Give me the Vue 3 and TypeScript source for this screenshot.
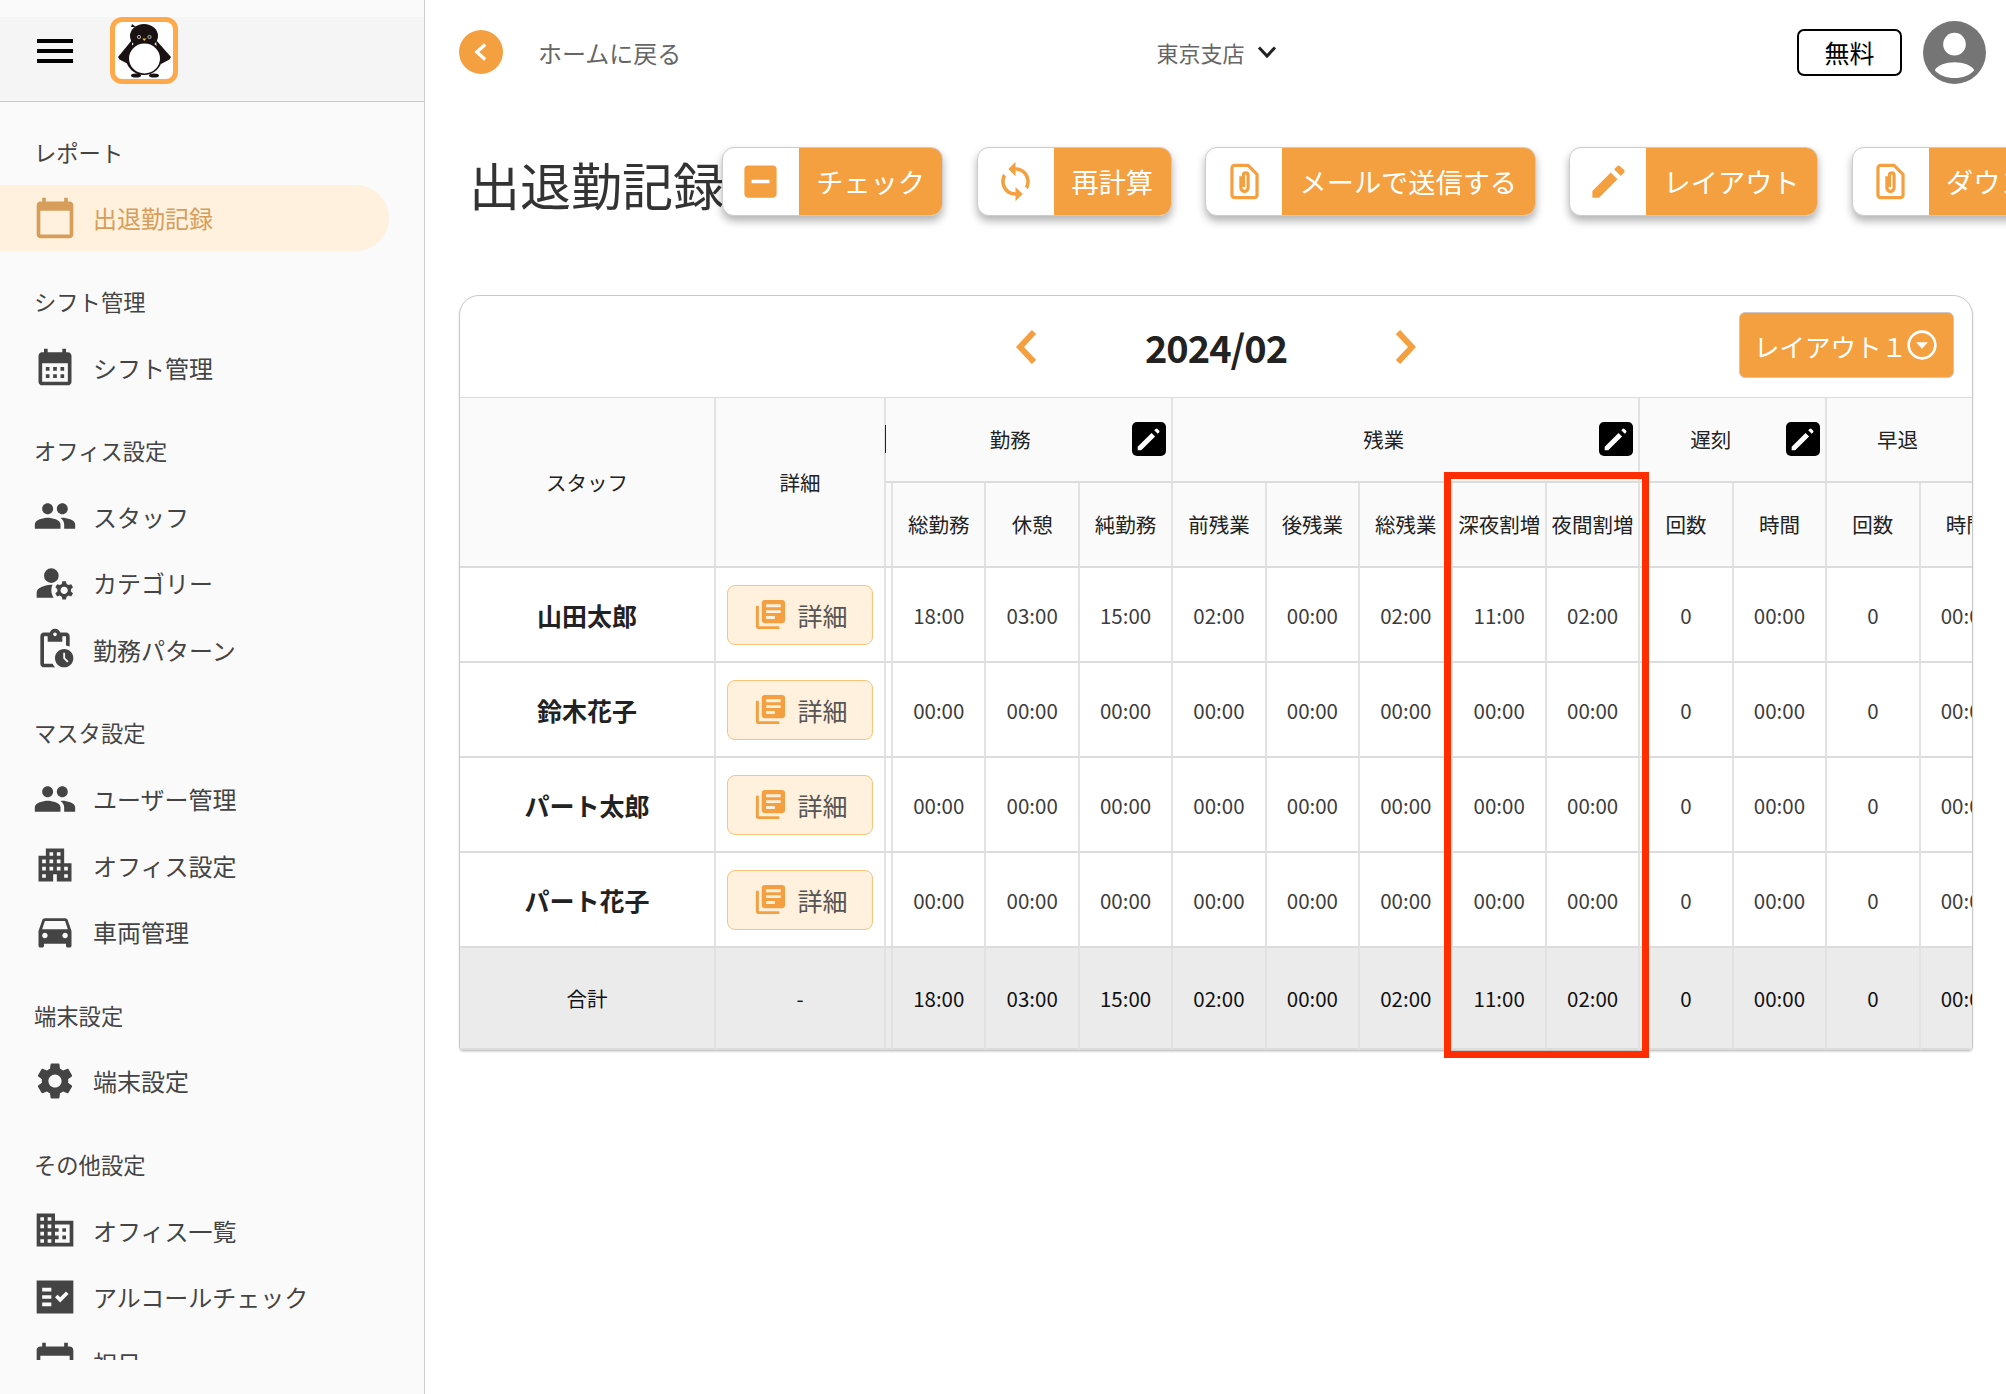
<template>
  <div class="app">
    <aside class="sidebar">
      <header class="side-head">
        <svg class="burger" viewBox="0 0 24 24"><path d="M3 18h18v-2H3v2zm0-5h18v-2H3v2zm0-7v2h18V6H3z" /></svg>
        <div class="logo">
          <svg viewBox="0 0 58 57">
            <g fill="#1a1212">
              <ellipse cx="29" cy="14" rx="14" ry="12" />
              <path d="M16 5l1-3 4 3z" />
              <ellipse cx="29" cy="36" rx="18" ry="17" />
              <path d="M17 18L3 35l1.500 2.500L13 42l4-12z" />
              <path d="M41 18l15 17-1.500 2.500L46 42l-4-12z" />
              <ellipse cx="21" cy="53.500" rx="5" ry="2" />
              <ellipse cx="39" cy="53.500" rx="5" ry="2" />
            </g>
            <ellipse cx="29.500" cy="36.500" rx="15.500" ry="15" fill="#fff" />
            <circle cx="24" cy="15" r="1.600" fill="none" stroke="#ddd" stroke-width=".8" />
            <circle cx="34.500" cy="15" r="1.600" fill="none" stroke="#ddd" stroke-width=".8" />
            <path d="M27.300 16.500h4l-2 2.500z" fill="#f5c518" />
          </svg>
        </div>
      </header>
      <nav class="side-nav">
        <section v-for="group in menu" :key="group.label" class="side-group">
          <div class="side-label">{{ group.label }}</div>
          <a v-for="item in group.items" :key="item.text" class="side-item" :class="{ active: item.active }">
            <svg viewBox="0 0 24 24"><path :d="item.icon" /></svg>
            <span>{{ item.text }}</span>
          </a>
        </section>
      </nav>
    </aside>

    <main class="main">
      <div class="topbar">
        <div class="back">
          <span class="back-circle">
            <svg viewBox="0 0 20 20"><polyline points="11.900,6.600 8.100,10 11.900,13.400" /></svg>
          </span>
          <span class="back-text">ホームに戻る</span>
        </div>
        <div class="branch">
          東京支店
          <svg viewBox="0 0 20 14"><polyline points="2,2.500 10,11 18,2.500" /></svg>
        </div>
        <div class="account">
          <span class="plan">無料</span>
          <svg class="avatar" viewBox="0 0 64 64">
            <circle cx="32" cy="32" r="32" fill="#757575" />
            <circle cx="32" cy="23.500" r="11.500" fill="#fff" />
            <path d="M12 50c3-5 11-8 20-8s17 3 20 8c-4 5-12 8-20 8s-16-3-20-8z" fill="#fff" />
          </svg>
        </div>
      </div>

      <div class="title-row">
        <h1>出退勤記録</h1>
        <button v-for="btn in actions" :key="btn.text" class="action">
          <span class="action-icon">
            <svg v-if="btn.icon" viewBox="0 0 24 24"><path :d="btn.icon" /></svg>
            <svg v-else viewBox="0 0 24 24" class="clip">
              <path d="M5 4.500A1.500 1.500 0 0 1 6.500 3H14l5 5v11.500a1.500 1.500 0 0 1-1.500 1.500h-11A1.500 1.500 0 0 1 5 19.500z" />
              <path d="M10 9v6.500a2 2 0 0 0 4 0V8.500a1.300 1.300 0 0 0-2.600 0V15" />
            </svg>
          </span>
          <span class="action-text">{{ btn.text }}</span>
        </button>
      </div>

      <div class="card-wrap">
        <div class="card">
          <div class="month-row">
            <div class="month">
              <svg viewBox="0 0 21 34"><polyline points="18,2 4,17 18,32" /></svg>
              <span>2024/02</span>
              <svg viewBox="0 0 21 34"><polyline points="3,2 17,17 3,32" /></svg>
            </div>
            <button class="layout-btn">
              レイアウト１
              <svg viewBox="0 0 30 30">
                <circle cx="15" cy="15" r="12.500" />
                <path d="M9.500 12.500h11L15 18.500z" />
              </svg>
            </button>
          </div>
          <div class="table-wrap">
            <table>
              <colgroup>
                <col class="col-staff" />
                <col class="col-detail" />
                <col class="col-spacer" />
                <col v-for="(c, i) in subHeads" :key="i" class="col-num" />
              </colgroup>
              <thead>
                <tr>
                  <th rowspan="2">スタッフ</th>
                  <th rowspan="2">詳細</th>
                  <th class="spacer-top"><span class="handle"></span></th>
                  <th v-for="h in groupHeads" :key="h.label" :colspan="h.span">
                    <div class="group-head">
                      <span>{{ h.label }}</span>
                      <span class="edit-box">
                        <svg viewBox="0 0 24 24"><path d="M4 17.500V20h2.500L16.300 10.200l-2.500-2.500zM18.200 8.300l.9-.9a1 1 0 0 0 0-1.400l-1.100-1.100a1 1 0 0 0-1.400 0l-.9.9z" /></svg>
                      </span>
                    </div>
                  </th>
                </tr>
                <tr>
                  <th></th>
                  <th v-for="(s, i) in subHeads" :key="i">{{ s }}</th>
                </tr>
              </thead>
              <tbody>
                <tr v-for="row in rows" :key="row.name">
                  <td class="name">{{ row.name }}</td>
                  <td>
                    <button class="detail-btn">
                      <svg viewBox="0 0 24 24"><path d="M4 6H2v14c0 1.100.9 2 2 2h14v-2H4V6zm16-4H8c-1.100 0-2 .9-2 2v12c0 1.100.9 2 2 2h12c1.100 0 2-.9 2-2V4c0-1.100-.9-2-2-2zm-1 9H9V9h10v2zm-4 4H9v-2h6v2zm4-8H9V5h10v2z" /></svg>
                      詳細
                    </button>
                  </td>
                  <td></td>
                  <td v-for="(v, i) in row.values" :key="i">{{ v }}</td>
                </tr>
              </tbody>
              <tfoot>
                <tr>
                  <td>合計</td>
                  <td>-</td>
                  <td></td>
                  <td v-for="(v, i) in totals" :key="i">{{ v }}</td>
                </tr>
              </tfoot>
            </table>
          </div>
        </div>
        <!-- 説明用の赤枠 -->
        <div class="highlight"></div>
      </div>
    </main>
  </div>
</template>

<script setup lang="ts">
const calendar =
  "M20 3h-1V1h-2v2H7V1H5v2H4c-1.100 0-2 .9-2 2v16c0 1.100.9 2 2 2h16c1.100 0 2-.9 2-2V5c0-1.100-.9-2-2-2zm0 18H4V8h16v13z";
const people =
  "M16 11c1.660 0 2.990-1.340 2.990-3S17.660 5 16 5c-1.660 0-3 1.340-3 3s1.340 3 3 3zm-8 0c1.660 0 2.990-1.340 2.990-3S9.660 5 8 5C6.340 5 5 6.340 5 8s1.340 3 3 3zm0 2c-2.330 0-7 1.170-7 3.500V19h14v-2.500c0-2.330-4.670-3.500-7-3.500zm8 0c-.29 0-.62.02-.97.05 1.160.84 1.970 1.970 1.970 3.450V19h6v-2.500c0-2.330-4.670-3.500-7-3.500z";
const paper = "";

const menu = [
  {
    label: "レポート",
    items: [{ text: "出退勤記録", icon: calendar, active: true }],
  },
  {
    label: "シフト管理",
    items: [
      {
        text: "シフト管理",
        icon: "M19 4h-1V2h-2v2H8V2H6v2H5c-1.100 0-1.990.9-1.990 2L3 20c0 1.100.9 2 2 2h14c1.100 0 2-.9 2-2V6c0-1.100-.9-2-2-2zm0 16H5V10h14v10zM9 14H7v-2h2v2zm4 0h-2v-2h2v2zm4 0h-2v-2h2v2zm-8 4H7v-2h2v2zm4 0h-2v-2h2v2zm4 0h-2v-2h2v2z",
      },
    ],
  },
  {
    label: "オフィス設定",
    items: [
      { text: "スタッフ", icon: people },
      {
        text: "カテゴリー",
        icon: "M10.670 13.020c-.22-.01-.44-.02-.67-.02-2.420 0-4.680.67-6.610 1.820-.88.52-1.390 1.500-1.390 2.530V20h9.260c-.79-1.130-1.260-2.510-1.260-4 0-1.070.25-2.070.67-2.980zM10 12a4 4 0 1 0 0-8 4 4 0 0 0 0 8zM20.750 16c0-.22-.03-.42-.06-.63l1.140-1.010-1-1.730-1.450.49c-.32-.27-.68-.48-1.080-.63L18 11h-2l-.3 1.490c-.4.15-.76.36-1.080.63l-1.450-.49-1 1.730 1.140 1.010c-.03.21-.06.41-.06.63s.03.42.06.63l-1.140 1.010 1 1.730 1.450-.49c.32.27.68.48 1.080.63L16 21h2l.3-1.490c.4-.15.76-.36 1.080-.63l1.450.49 1-1.730-1.140-1.010c.03-.21.06-.41.06-.63zM17 18c-1.100 0-2-.9-2-2s.9-2 2-2 2 .9 2 2-.9 2-2 2z",
      },
      {
        text: "勤務パターン",
        icon: "M17 12c-2.760 0-5 2.240-5 5s2.240 5 5 5 5-2.240 5-5-2.240-5-5-5zm1.650 7.350L16.500 17.200V14h1v2.790l1.850 1.850-.7.710zM18 3h-3.180C14.400 1.840 13.300 1 12 1s-2.400.84-2.820 2H6c-1.100 0-2 .9-2 2v15c0 1.100.9 2 2 2h6.110c-.59-.57-1.070-1.250-1.420-2H6V5h2v3h8V5h2v5.080c.71.1 1.380.31 2 .6V5c0-1.100-.9-2-2-2zm-6 2c-.55 0-1-.45-1-1s.45-1 1-1 1 .45 1 1-.45 1-1 1z",
      },
    ],
  },
  {
    label: "マスタ設定",
    items: [
      { text: "ユーザー管理", icon: people },
      {
        text: "オフィス設定",
        icon: "M17 11V3H7v4H3v14h8v-4h2v4h8V11h-4zM7 19H5v-2h2v2zm0-4H5v-2h2v2zm0-4H5V9h2v2zm4 4H9v-2h2v2zm0-4H9V9h2v2zm0-4H9V5h2v2zm4 8h-2v-2h2v2zm0-4h-2V9h2v2zm0-4h-2V5h2v2zm4 12h-2v-2h2v2zm0-4h-2v-2h2v2z",
      },
      {
        text: "車両管理",
        icon: "M18.920 6.010C18.720 5.420 18.160 5 17.500 5h-11c-.66 0-1.210.42-1.420 1.010L3 12v8c0 .55.45 1 1 1h1c.55 0 1-.45 1-1v-1h12v1c0 .55.45 1 1 1h1c.55 0 1-.45 1-1v-8l-2.080-5.990zM6.500 16c-.83 0-1.500-.67-1.500-1.500S5.670 13 6.500 13s1.500.67 1.500 1.500S7.330 16 6.500 16zm11 0c-.83 0-1.500-.67-1.500-1.500s.67-1.500 1.500-1.500 1.500.67 1.500 1.500-.67 1.500-1.500 1.500zM5 11l1.500-4.500h11L19 11H5z",
      },
    ],
  },
  {
    label: "端末設定",
    items: [
      {
        text: "端末設定",
        icon: "M19.140 12.940c.04-.3.06-.61.06-.94 0-.32-.02-.64-.07-.94l2.030-1.580c.18-.14.23-.41.12-.61l-1.920-3.320c-.12-.22-.37-.29-.59-.22l-2.390.96c-.5-.38-1.030-.7-1.620-.94l-.36-2.540c-.04-.24-.24-.41-.48-.41h-3.840c-.24 0-.43.17-.47.41l-.36 2.540c-.59.24-1.130.57-1.620.94l-2.390-.96c-.22-.08-.47 0-.59.22L2.740 8.870c-.12.21-.08.47.12.61l2.030 1.580c-.05.3-.09.63-.09.94s.02.64.07.94l-2.030 1.580c-.18.14-.23.41-.12.61l1.920 3.320c.12.22.37.29.59.22l2.390-.96c.5.38 1.030.7 1.620.94l.36 2.540c.05.24.24.41.48.41h3.840c.24 0 .44-.17.47-.41l.36-2.540c.59-.24 1.130-.56 1.620-.94l2.390.96c.22.08.47 0 .59-.22l1.920-3.320c.12-.22.07-.47-.12-.61l-2.010-1.580zM12 15.600c-1.980 0-3.600-1.620-3.600-3.600s1.620-3.600 3.600-3.600 3.600 1.620 3.600 3.600-1.620 3.600-3.600 3.600z",
      },
    ],
  },
  {
    label: "その他設定",
    items: [
      {
        text: "オフィス一覧",
        icon: "M12 7V3H2v18h20V7H12zM6 19H4v-2h2v2zm0-4H4v-2h2v2zm0-4H4V9h2v2zm0-4H4V5h2v2zm4 12H8v-2h2v2zm0-4H8v-2h2v2zm0-4H8V9h2v2zm0-4H8V5h2v2zm10 12h-8v-2h2v-2h-2v-2h2v-2h-2V9h8v10zm-2-8h-2v2h2v-2zm0 4h-2v2h2v-2z",
      },
      {
        text: "アルコールチェック",
        icon: "M22 3H2v18h20V3zM10 17H5v-2h5v2zm0-4H5v-2h5v2zm0-4H5V7h5v2zm4.820 6L12 12.160l1.410-1.410 1.410 1.420L17.990 9l1.420 1.420L14.820 15z",
      },
      { text: "祝日", icon: calendar },
    ],
  },
];

const actions = [
  {
    text: "チェック",
    icon: "M19 3H5c-1.100 0-2 .9-2 2v14c0 1.100.9 2 2 2h14c1.100 0 2-.9 2-2V5c0-1.100-.9-2-2-2zm-2 10H7v-2h10v2z",
  },
  {
    text: "再計算",
    icon: "M12 4V1L8 5l4 4V6c3.310 0 6 2.690 6 6 0 1.010-.25 1.970-.7 2.800l1.460 1.460C19.540 15.030 20 13.570 20 12c0-4.420-3.580-8-8-8zm0 14c-3.310 0-6-2.690-6-6 0-1.010.25-1.970.7-2.800L5.240 7.740C4.460 8.970 4 10.430 4 12c0 4.420 3.580 8 8 8v3l4-4-4-4v3z",
  },
  { text: "メールで送信する", icon: paper },
  {
    text: "レイアウト",
    icon: "M3 17.250V21h3.750L17 10.750 13.250 7zM20.700 7.050c.4-.4.4-1 0-1.400l-2.350-2.350c-.4-.4-1-.4-1.400 0L15.100 5.150l3.750 3.750z",
  },
  { text: "ダウンロード", icon: paper },
];

const groupHeads = [
  { label: "勤務", span: 3 },
  { label: "残業", span: 5 },
  { label: "遅刻", span: 2 },
  { label: "早退", span: 2 },
];

const subHeads = [
  "総勤務", "休憩", "純勤務",
  "前残業", "後残業", "総残業", "深夜割増", "夜間割増",
  "回数", "時間",
  "回数", "時間",
];

const totals = ["18:00", "03:00", "15:00", "02:00", "00:00", "02:00", "11:00", "02:00", "0", "00:00", "0", "00:00"];
const zeros = ["00:00", "00:00", "00:00", "00:00", "00:00", "00:00", "00:00", "00:00", "0", "00:00", "0", "00:00"];

const rows = [
  { name: "山田太郎", values: totals },
  { name: "鈴木花子", values: zeros },
  { name: "パート太郎", values: zeros },
  { name: "パート花子", values: zeros },
];
</script>

<style scoped>
.app {
  display: flex;
  height: 1394px;
  overflow: hidden;
  background: #fff;
  color: #333;
  font-family: "Noto Sans CJK JP", "Noto Sans", sans-serif;
}

/* sidebar */
.sidebar {
  flex: 0 0 425px;
  box-sizing: border-box;
  height: 100%;
  background: #fafafa;
  border-right: 1px solid #ccc;
}
.side-head {
  display: flex;
  align-items: flex-start;
  gap: 31px;
  box-sizing: border-box;
  height: 85px;
  margin-top: 17px;
  padding-left: 31px;
  background: #f5f5f5;
  border-bottom: 1px solid #c8c8c8;
}
.burger {
  width: 48px;
  height: 48px;
  margin-top: 10px;
  fill: #000;
}
.logo {
  box-sizing: border-box;
  width: 68px;
  height: 67px;
  background: #fff;
  border: 5px solid #ffa94d;
  border-radius: 12px;
}
.logo svg {
  display: block;
  width: 100%;
  height: 100%;
}
.side-nav {
  box-sizing: border-box;
  height: 1258px;
  padding-top: 33.500px;
  overflow: hidden;
}
.side-group {
  margin-bottom: 34px;
}
.side-label {
  height: 33px;
  margin-bottom: 16px;
  padding-left: 34px;
  font-size: 22.300px;
  line-height: 33px;
  color: #444;
}
.side-item {
  display: flex;
  align-items: center;
  gap: 16px;
  height: 66.400px;
  margin-right: 35px;
  padding-left: 33px;
  border-radius: 0 33px 33px 0;
  font-size: 24px;
  color: #444;
}
.side-item svg {
  flex: none;
  width: 44px;
  height: 44px;
  fill: #444;
}
.side-item.active {
  background: #fff1de;
  color: #d69e5a;
}
.side-item.active svg {
  fill: #d69e5a;
}

/* main */
.main {
  flex: 1;
  min-width: 0;
  overflow: hidden;
}
.topbar {
  display: grid;
  grid-template-columns: 1fr auto 1fr;
  align-items: center;
  height: 104px;
  padding: 0 20px 0 34px;
}
.back {
  display: flex;
  align-items: center;
  gap: 35px;
}
.back-circle {
  display: flex;
  width: 44px;
  height: 44px;
  border-radius: 50%;
  background: #f4a040;
}
.back-circle svg {
  width: 100%;
  fill: none;
  stroke: #fff;
  stroke-width: 1.500;
}
.back-text {
  font-size: 24px;
  color: #666;
}
.branch {
  display: flex;
  align-items: center;
  gap: 12px;
  margin-left: -12px;
  font-size: 22px;
  color: #666;
}
.branch svg {
  width: 20px;
  height: 14px;
  fill: none;
  stroke: #222;
  stroke-width: 3;
}
.account {
  display: flex;
  align-items: center;
  justify-content: flex-end;
  gap: 21px;
}
.plan {
  box-sizing: border-box;
  width: 105px;
  height: 47px;
  border: 2px solid #000;
  border-radius: 7px;
  font-size: 25px;
  line-height: 42px;
  text-align: center;
  color: #000;
}
.avatar {
  width: 63px;
  height: 63px;
}
.title-row {
  display: flex;
  align-items: center;
  gap: 33.500px;
  height: 71px;
  margin: 42px 0 0 44px;
}
.title-row h1 {
  flex: none;
  width: 254px;
  margin: 5px -34.800px 0 0;
  font-size: 51px;
  font-weight: 400;
  line-height: 1.300;
  color: #333;
  white-space: nowrap;
}
.action {
  display: flex;
  flex: none;
  align-items: stretch;
  height: 69px;
  padding: 0;
  overflow: hidden;
  font: inherit;
  border: 1px solid #ccc;
  border-radius: 12px;
  background: #fff;
  box-shadow: 0 5px 9px rgba(0, 0, 0, 0.3);
}
.action-icon {
  display: flex;
  align-items: center;
  justify-content: center;
  width: 76px;
}
.action-icon svg {
  width: 43px;
  height: 43px;
  fill: #f4a040;
}
.action-icon svg.clip {
  fill: none;
  stroke: #f4a040;
  stroke-width: 1.800;
}
.action-text {
  padding: 0 17.500px;
  font-size: 27.200px;
  line-height: 67px;
  color: #fff;
  background: #f4a040;
  white-space: nowrap;
}

/* table card */
.card-wrap {
  position: relative;
  width: 1514px;
  margin: 78px 0 0 34px;
}
.card {
  overflow: hidden;
  border: 1px solid #c8c8c8;
  border-radius: 20px 20px 4px 4px;
  box-shadow: 0 1px 2px rgba(0, 0, 0, 0.15);
}
.month-row {
  display: grid;
  grid-template-columns: 1fr auto 1fr;
  align-items: center;
  box-sizing: border-box;
  height: 101px;
}
.month {
  display: flex;
  grid-column: 2;
  align-items: center;
  gap: 108px;
  font-size: 38px;
  font-weight: 700;
  letter-spacing: -1px;
  color: #222;
}
.month svg {
  width: 21px;
  height: 34px;
  fill: none;
  stroke: #f4a040;
  stroke-width: 6;
}
.layout-btn {
  display: flex;
  align-items: center;
  gap: 0;
  justify-self: end;
  box-sizing: border-box;
  width: 215px;
  height: 66px;
  margin: 0 18px 3px 0;
  padding: 0 0 0 14px;
  font: inherit;
  font-size: 25.500px;
  color: #fff;
  white-space: nowrap;
  background: #f4a040;
  border: 1px solid #c8c8c8;
  border-radius: 6px;
}
.layout-btn svg {
  flex: none;
  width: 32px;
  height: 32px;
  margin-left: -1px;
}
.layout-btn circle {
  fill: none;
  stroke: #fff;
  stroke-width: 2.500;
}
.layout-btn path {
  fill: #fff;
}
.table-wrap {
  overflow: hidden;
}
table {
  width: 1554px;
  table-layout: fixed;
  border-collapse: separate;
  border-spacing: 0;
  font-size: 20.500px;
}
.col-staff {
  width: 256px;
}
.col-detail {
  width: 170px;
}
.col-spacer {
  width: 7px;
}
.col-num {
  width: 93.400px;
}
th,
td {
  box-sizing: border-box;
  padding: 0;
  text-align: center;
  border-right: 2px solid #e2e2e2;
  border-bottom: 2px solid #dcdcdc;
  white-space: nowrap;
}
thead tr:first-child th {
  border-top: 1px solid #dcdcdc;
}
th {
  height: 85.500px;
  font-weight: 400;
  color: #222;
  background: #fafafa;
}
.spacer-top {
  position: relative;
  border-right: none;
}
.handle {
  position: absolute;
  top: 27px;
  left: -1px;
  width: 1px;
  height: 28px;
  background: #222;
}
.group-head {
  display: flex;
  align-items: center;
  padding-right: 5px;
}
.group-head span:first-child {
  flex: 1;
  padding-right: 5px;
}
.edit-box {
  display: flex;
  flex: none;
  width: 34px;
  height: 34px;
  border-radius: 5px;
  background: #000;
}
.edit-box svg {
  width: 100%;
  fill: #fff;
}
tbody td {
  height: 95px;
  color: #3c3c3c;
}
td.name {
  font-size: 25px;
  font-weight: 700;
  color: #222;
}
.detail-btn {
  display: inline-flex;
  align-items: center;
  justify-content: center;
  gap: 10px;
  box-sizing: border-box;
  width: 146px;
  height: 60px;
  padding: 0;
  font: inherit;
  font-size: 25px;
  color: #555;
  background: #fff1de;
  border: 1px solid #f9c37c;
  border-radius: 8px;
}
.detail-btn svg {
  width: 35px;
  height: 35px;
  fill: #f4a040;
}
tfoot td {
  height: 102px;
  color: #111;
  background: #ebebeb;
}
.highlight {
  position: absolute;
  top: 177px;
  left: 985px;
  box-sizing: border-box;
  width: 205px;
  height: 586px;
  pointer-events: none;
  border: 7px solid #ff2d00;
}
</style>

<style>
html,
body {
  margin: 0;
  overflow: hidden;
}
</style>
